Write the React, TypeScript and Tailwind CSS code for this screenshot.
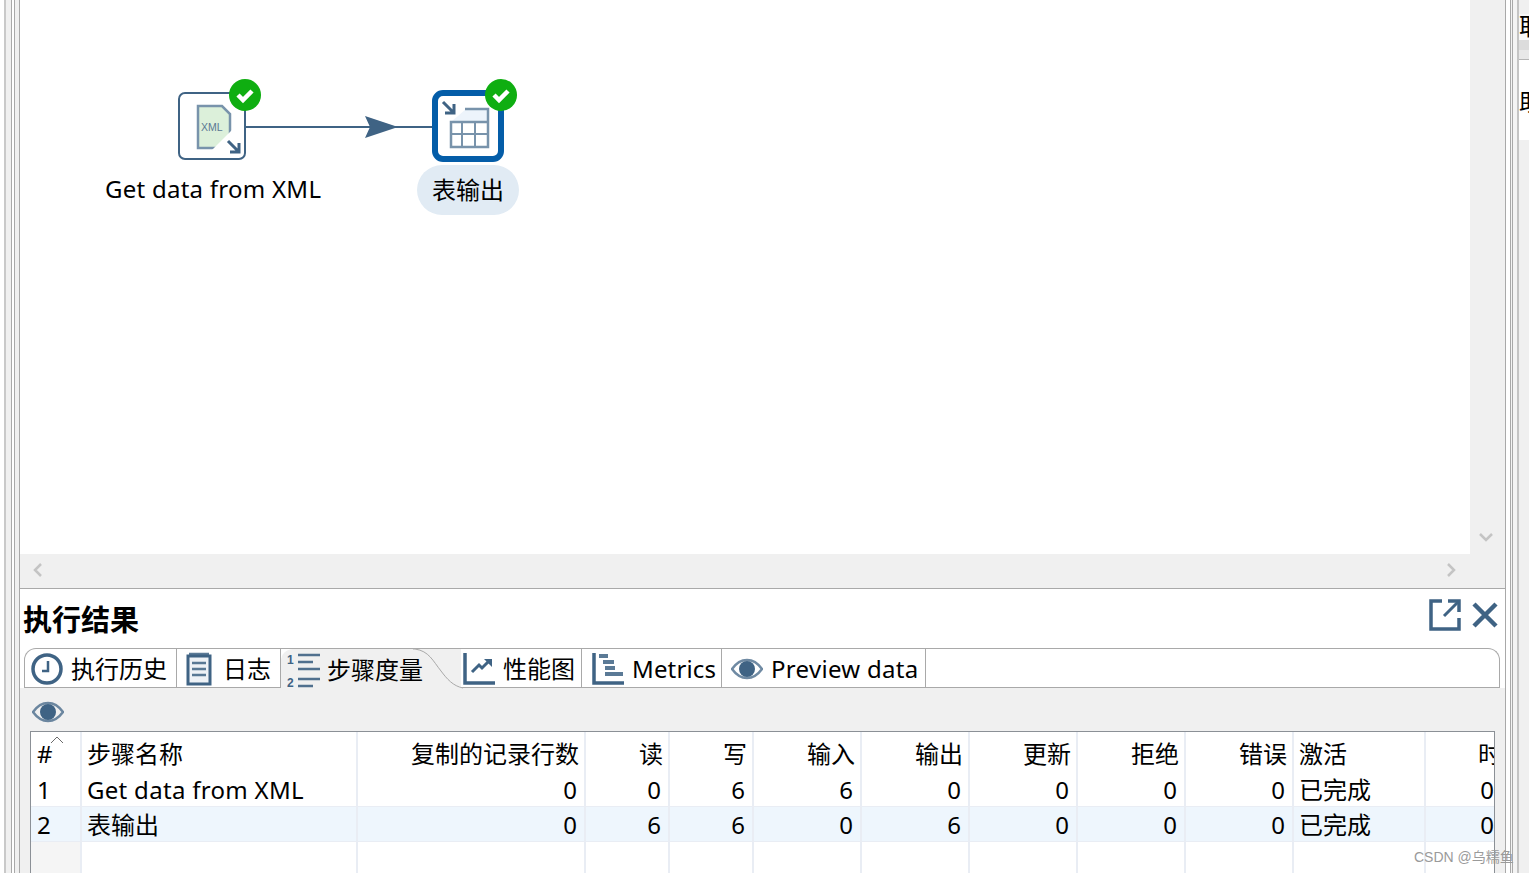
const ink = "#3f6384";

const columns = [
  { label: "#", align: "left" },
  { label: "步骤名称", align: "left" },
  { label: "复制的记录行数", align: "right" },
  { label: "读", align: "right" },
  { label: "写", align: "right" },
  { label: "输入", align: "right" },
  { label: "输出", align: "right" },
  { label: "更新", align: "right" },
  { label: "拒绝", align: "right" },
  { label: "错误", align: "right" },
  { label: "激活", align: "left" },
  { label: "时", align: "right" },
];

const rows = [
  ["1", "Get data from XML", "0", "0", "6", "6", "0", "0", "0", "0", "已完成", "0"],
  ["2", "表输出", "0", "6", "6", "0", "6", "0", "0", "0", "已完成", "0"],
];

const gridCols =
  "grid grid-cols-[51px_276px_228px_84px_84px_108px_108px_108px_108px_108px_132px_70px]";

function EyeIcon() {
  return (
    <svg width="32" height="22" viewBox="0 0 32 22">
      <path d="M1 11C6 4 11 2 16 2s10 2 15 9c-5 7-10 9-15 9S6 18 1 11z" fill="none" stroke={ink} strokeWidth="2.5" opacity="0.75" />
      <circle cx="16" cy="11" r="8" fill={ink} />
    </svg>
  );
}

function ClockIcon() {
  return (
    <svg width="32" height="32" viewBox="0 0 32 32">
      <circle cx="16" cy="16" r="14" fill="none" stroke={ink} strokeWidth="3.5" />
      <path d="M17 8v10h-6" fill="none" stroke={ink} strokeWidth="2.5" />
    </svg>
  );
}

function LogIcon() {
  return (
    <svg width="26" height="34" viewBox="0 0 26 34">
      <rect x="2" y="4" width="22" height="28" fill="#eef2f6" stroke={ink} strokeWidth="3" />
      <path d="M3 2h20M6 11h14M6 17h14M6 23h14" stroke={ink} strokeWidth="2.5" opacity="0.85" />
    </svg>
  );
}

function MetricsListIcon() {
  return (
    <svg width="34" height="36" viewBox="0 0 34 36">
      <text x="0" y="12" fontSize="12" fontWeight="700" fill={ink} fontFamily="Liberation Sans">1</text>
      <text x="0" y="35" fontSize="12" fontWeight="700" fill={ink} fontFamily="Liberation Sans">2</text>
      <path d="M11 3h22M11 10h15M11 17h22M11 27h22M11 34h15" stroke={ink} strokeWidth="2.5" opacity="0.9" />
    </svg>
  );
}

function ChartIcon() {
  return (
    <svg width="32" height="32" viewBox="0 0 32 32">
      <path d="M2 0v30h30" fill="none" stroke={ink} strokeWidth="3.5" />
      <path d="M9 19l7-7 3 3 7-7" fill="none" stroke={ink} strokeWidth="3" />
      <path d="M21 6h8v8z" fill={ink} />
    </svg>
  );
}

function GanttIcon() {
  return (
    <svg width="32" height="32" viewBox="0 0 32 32">
      <path d="M2 0v30h30" fill="none" stroke={ink} strokeWidth="3.5" />
      <path d="M7 3h9M11 9h11M13 15h10M13 21h18" stroke={ink} strokeWidth="4" opacity="0.85" />
    </svg>
  );
}

function CheckBadge({ className }: { className: string }) {
  return (
    <svg className={`absolute ${className}`} width="32" height="32" viewBox="0 0 32 32">
      <circle cx="16" cy="16" r="16" fill="#0fae11" />
      <path d="M9 16l5 5 9-9" fill="none" stroke="#ffffff" strokeWidth="4.5" />
    </svg>
  );
}

function CornerArrow({ x, y }: { x: number; y: number }) {
  return (
    <g transform={`translate(${x} ${y})`} stroke={ink} strokeWidth="3" fill="none">
      <path d="M0 0l11 11M11 2v9H2" />
    </g>
  );
}

function Canvas() {
  return (
    <div className="relative flex-1 bg-white overflow-hidden">
      <svg className="absolute left-[220px] top-[116px]" width="200" height="24" viewBox="0 0 200 24">
        <path d="M6 11h186" stroke={ink} strokeWidth="2" />
        <path d="M125 0l33 11-33 11 5-11z" fill={ink} />
      </svg>

      <div className="absolute left-[158px] top-[92px] w-[68px] h-[68px] rounded-[7px] border-2 border-[#3f6384] bg-white">
        <svg width="64" height="64" viewBox="0 0 64 64">
          <path d="M18 12h24l8 8v34H18z" fill="#dcf0da" stroke="#7893ab" strokeWidth="2.5" />
          <path d="M52 36v20H32z" fill="#ffffff" />
          <CornerArrow x={48} y={47} />
          <text x="21" y="37" fontSize="10.5" fill="#5b7893" fontFamily="Liberation Sans">XML</text>
        </svg>
      </div>
      <CheckBadge className="left-[209px] top-[79px]" />
      <div className="absolute left-[85px] top-[172px] text-[24px] leading-[34px] tracking-[0.26px] whitespace-nowrap text-black">
        Get data from XML
      </div>

      <div className="absolute left-[412px] top-[90px] w-[72px] h-[72px] rounded-[11px] border-[6px] border-[#045da8] bg-white">
        <svg width="60" height="60" viewBox="0 0 60 60">
          <CornerArrow x={5} y={6} />
          <path d="M13 26L28 13h22v13z" fill="#edf4fb" />
          <path d="M27 13h23v38H13V26h37" fill="none" stroke="#7893ab" strokeWidth="2.5" />
          <path d="M24 26v25M37 26v25M13 38h37" fill="none" stroke="#7893ab" strokeWidth="2" />
        </svg>
      </div>
      <CheckBadge className="left-[465px] top-[79px]" />
      <div className="absolute left-[397px] top-[165px] w-[102px] h-[50px] rounded-full bg-[#e1ebf4] flex items-center justify-center text-[24px] text-black">
        表输出
      </div>
    </div>
  );
}

function Tab({ label, icon, className }: { label: string; icon: React.ReactNode; className: string }) {
  return (
    <div className={`flex items-center h-[39px] pt-[2px] border-r border-b border-[#a9a9a9] rounded-tl-[10px] whitespace-nowrap ${className}`}>
      {icon}
      <span>{label}</span>
    </div>
  );
}

function Tabs() {
  return (
    <div className="relative flex h-[40px] mx-[4px] w-[1476px] border-t border-r border-l border-[#a9a9a9] rounded-t-[12px] text-[24px] leading-none text-black">
      <Tab label="执行历史" icon={<ClockIcon />} className="w-[152px] pl-[6px] gap-[8px]" />
      <Tab label="日志" icon={<LogIcon />} className="w-[104px] pl-[9px] gap-[11px]" />
      <div className="relative flex items-center h-[39px] w-[180px] pt-[2px] pl-[6px] gap-[6px] bg-[#f0f0f0] rounded-tl-[12px] whitespace-nowrap">
        <svg className="absolute right-[-2px] top-0" width="50" height="40" viewBox="0 0 50 40">
          <path d="M0 0h2c14 2 18 12 26 22 6 8 12 15 22 17H0z" fill="#f0f0f0" stroke="none" />
          <path d="M0 0h2c14 2 18 12 26 22 6 8 12 15 22 17" fill="none" stroke="#a9a9a9" />
        </svg>
        <span className="relative"><MetricsListIcon /></span>
        <span className="relative">步骤度量</span>
      </div>
      <Tab label="性能图" icon={<ChartIcon />} className="w-[121px] pl-[2px] gap-[8px]" />
      <Tab label="Metrics" icon={<GanttIcon />} className="w-[140px] pl-[10px] gap-[8px] tracking-[0.15px]" />
      <Tab label="Preview data" icon={<EyeIcon />} className="w-[204px] pl-[9px] gap-[8px] tracking-[0.3px]" />
      <div className="flex-1 h-[39px] border-b border-[#a9a9a9]" />
    </div>
  );
}

function ResultTable() {
  const cell = "border-r-2 border-[#e9edf4] overflow-hidden whitespace-nowrap";
  return (
    <div className="mx-[10px] w-[1465px] flex-1 border-t border-l border-r border-[#8b9096] bg-white text-[24px] text-black overflow-hidden">
      <div className={`${gridCols} h-[40px]`}>
        {columns.map((col, i) => {
          const place =
            i === 11
              ? "border-r-0 justify-start pl-[52px]"
              : col.align === "right"
                ? "justify-end pr-[5px]"
                : i === 0
                  ? "justify-start pl-[6px]"
                  : "justify-start pl-[5px]";
          return (
            <div key={col.label} className={`relative flex items-center pt-[3px] ${cell} ${place}`}>
              {col.label}
              {i === 0 && (
                <svg className="absolute left-[19px] top-[4px]" width="14" height="8" viewBox="0 0 14 8">
                  <path d="M1 7l6-6 6 6" fill="none" stroke="#6b6b6b" />
                </svg>
              )}
            </div>
          );
        })}
      </div>
      {rows.map((row, r) => (
        <div key={row[0]} className={`${gridCols} h-[35px] border-b border-[#e9edf4] ${r === 1 ? "bg-[#eef6fd]" : "bg-white"}`}>
          {row.map((value, i) => {
            const place =
              i === 11
                ? "border-r-0 justify-end pr-0"
                : columns[i].align === "right"
                  ? "justify-end pr-[7px]"
                  : i === 0
                    ? "justify-start pl-[6px]"
                    : "justify-start pl-[5px]";
            return (
              <div key={i} className={`flex items-center pt-[2px] ${cell} ${place} ${i === 1 && r === 0 ? "tracking-[0.3px]" : ""}`}>
                {value}
              </div>
            );
          })}
        </div>
      ))}
      <div className={`${gridCols} h-[40px]`}>
        {columns.map((col, i) => (
          <div key={col.label} className={`${cell} ${i === 0 ? "bg-[#f5f5f5]" : ""} ${i === 11 ? "border-r-0" : ""}`} />
        ))}
      </div>
    </div>
  );
}

export default function App() {
  return (
    <div className="relative flex w-[1529px] h-[873px] overflow-hidden bg-white font-['Noto_Sans','Noto_Sans_CJK_SC',sans-serif]">
      {/* left window edge */}
      <div className="flex w-[20px] shrink-0 bg-[#f4f4f4]">
        <div className="w-[4px] bg-white" />
        <div className="w-[2px] bg-[#c9c9c9]" />
        <div className="w-[5px] bg-[#f0f0f0]" />
        <div className="w-px bg-[#a9a9a9]" />
        <div className="w-[2px] bg-white" />
        <div className="w-px bg-[#a9a9a9]" />
        <div className="w-[4px] bg-[#f0f0f0]" />
        <div className="w-px bg-[#a9a9a9]" />
      </div>

      <div className="flex flex-col w-[1485px] shrink-0">
        <div className="flex h-[554px]">
          <Canvas />
          <div className="flex flex-col justify-end items-center w-[35px] pb-[12px] pr-[3px] bg-[#f0f0f0] text-[#c4c4c4]">
            <svg width="14" height="9" viewBox="0 0 14 9"><path d="M1 1l6 6 6-6" fill="none" stroke="currentColor" strokeWidth="2.5" /></svg>
          </div>
        </div>
        <div className="flex items-center justify-between h-[35px] pl-[13px] pr-[49px] pb-[2px] bg-[#f0f0f0] border-b border-[#a9a9a9] text-[#c4c4c4]">
          <svg width="9" height="14" viewBox="0 0 9 14"><path d="M8 1L2 7l6 6" fill="none" stroke="currentColor" strokeWidth="2.5" /></svg>
          <svg width="9" height="14" viewBox="0 0 9 14"><path d="M1 1l6 6-6 6" fill="none" stroke="currentColor" strokeWidth="2.5" /></svg>
        </div>

        <div className="flex flex-col flex-1 min-h-0">
          <div className="flex items-center justify-between h-[59px] pl-[3px] pr-[6px] shrink-0">
            <h2 className="text-[29px] font-bold leading-none pt-[2px] text-black">执行结果</h2>
            <div className="flex items-center gap-[10px] mt-[-8px]">
              <svg width="32" height="32" viewBox="0 0 32 32">
                <path d="M13 2H2v28h28V19M19 2h11v11" fill="none" stroke={ink} strokeWidth="3.5" />
                <path d="M15 17L29 3" stroke={ink} strokeWidth="3" />
              </svg>
              <svg width="28" height="28" viewBox="0 0 28 28">
                <path d="M3 3l22 22M25 3L3 25" stroke={ink} strokeWidth="4.5" />
              </svg>
            </div>
          </div>
          <Tabs />
          <div className="flex flex-col flex-1 min-h-0 bg-[#f0f0f0]">
            <div className="flex items-center h-[43px] pl-[12px] pt-[4px] shrink-0">
              <EyeIcon />
            </div>
            <ResultTable />
          </div>
        </div>
      </div>

      {/* right window edge with the neighbouring view cut off */}
      <div className="relative flex w-[24px] shrink-0 bg-[#f0f0f0]">
        <div className="w-px bg-[#a9a9a9]" />
        <div className="w-[4px] bg-white" />
        <div className="w-px bg-[#a9a9a9]" />
        <div className="w-px bg-[#f4f4f4]" />
        <div className="w-px bg-[#a9a9a9]" />
        <div className="w-[4px] bg-[#f4f4f4]" />
        <div className="w-[2px] bg-[#c4c4c4]" />
        <div className="flex-1 flex flex-col overflow-hidden text-[24px] leading-none text-black">
          <div className="h-[14px] bg-[#f0f0f0]" />
          <div className="h-[26px] bg-[#f8f8f8] whitespace-nowrap">取</div>
          <div className="h-[10px] bg-[#dcdcdc]" />
          <div className="h-[10px] bg-[#e8e8e8] border-b border-[#b5b5b5]" />
          <div className="h-[80px] bg-white pt-[30px] whitespace-nowrap">助</div>
          <div className="flex-1 bg-[#f0f0f0]" />
        </div>
      </div>

      <div className="absolute left-[1414px] top-[848px] text-[14px] leading-[18px] text-[#9a9a9a] font-['Liberation_Sans','Noto_Sans_CJK_SC',sans-serif] whitespace-nowrap">
        CSDN @乌糯鱼
      </div>
    </div>
  );
}
